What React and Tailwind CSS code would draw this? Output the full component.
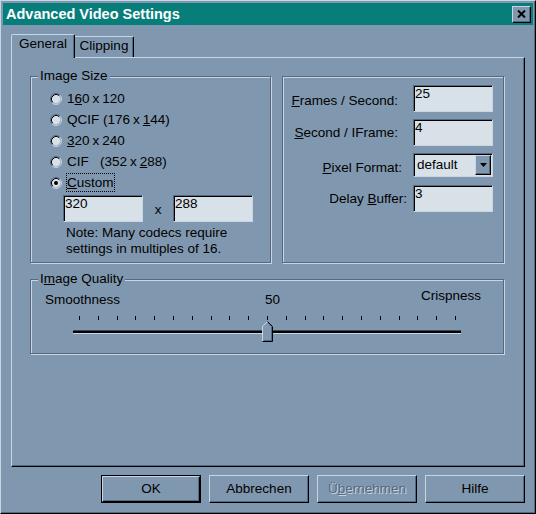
import React from "react";

const raised =
  "border border-t-[#c8d6e4] border-l-[#c8d6e4] border-r-black border-b-black shadow-[inset_-1px_-1px_0_#56697e]";
const sunken =
  "border border-t-[#56697e] border-l-[#56697e] border-r-[#c8d6e4] border-b-[#c8d6e4] shadow-[inset_1px_1px_0_#000] bg-[#d8e0e8]";
const etched =
  "border border-[#56697e] shadow-[inset_1px_1px_0_#c8d6e4,1px_1px_0_#c8d6e4]";

function Radio({ checked }) {
  return (
    <svg width="12" height="12" viewBox="0 0 12 12" className="shrink-0">
      <circle cx="6" cy="6" r="4.5" fill="#d8e0e8" />
      <path d="M2.11 9.89 A5.5 5.5 0 0 1 9.89 2.11" fill="none" stroke="#56697e" />
      <path d="M9.89 2.11 A5.5 5.5 0 0 1 2.11 9.89" fill="none" stroke="#c8d6e4" />
      <path d="M2.82 9.18 A4.5 4.5 0 0 1 9.18 2.82" fill="none" stroke="#000" />
      <path d="M9.18 2.82 A4.5 4.5 0 0 1 2.82 9.18" fill="none" stroke="#a9b9ca" />
      {checked && <circle cx="6" cy="6" r="2" fill="#000" />}
    </svg>
  );
}

function RadioRow({ children, checked, focus }) {
  return (
    <div className="flex h-[21px] items-center gap-[4px] pl-[19px]">
      <Radio checked={checked} />
      <span className={focus ? "border border-dotted border-black leading-[17px]" : "border border-transparent"}>
        {children}
      </span>
    </div>
  );
}

function Dim({ a, b }) {
  return (
    <>
      {a}
      <span className="mx-[3px]">x</span>
      {b}
    </>
  );
}

function Field({ value, className = "" }) {
  return (
    <div className={`h-[27px] w-[80px] pl-[1px] ${sunken} ${className}`}>{value}</div>
  );
}

function Group({ label, className, children }) {
  return (
    <div className={`relative bg-[#8098af] ${etched} ${className}`}>
      <span className="absolute -top-[9px] left-[7px] bg-[#8098af] px-[2px]">{label}</span>
      {children}
    </div>
  );
}

function Button({ children, primary, disabled }) {
  const inner = (
    <div
      className={`flex h-full w-full items-center justify-center ${raised} ${
        disabled ? "text-[#56697e] [text-shadow:1px_1px_0_#c8d6e4]" : ""
      }`}
    >
      {children}
    </div>
  );
  return primary ? (
    <div className="h-[28px] w-[100px] border border-black">{inner}</div>
  ) : (
    <div className="h-[28px] w-[100px]">{inner}</div>
  );
}

export default function App() {
  const ticks = Array.from({ length: 21 }, (_, i) => i);
  return (
    <div className="h-[514px] w-[536px] overflow-hidden border border-t-[#c8d6e4] border-l-[#c8d6e4] border-r-black border-b-black bg-[#8098af] p-[2px] font-['Liberation_Sans',Arial,sans-serif] text-[13.5px] leading-[16px] text-black shadow-[inset_-1px_-1px_0_#56697e]">
      <div className="flex h-[22px] items-center bg-[#087e7b] pl-[3px] pr-[2px]">
        <span className="text-[14.5px] font-bold text-white">Advanced Video Settings</span>
        <div className={`ml-auto flex h-[17px] w-[19px] items-center justify-center bg-[#8098af] ${raised}`}>
          <svg width="9" height="8" viewBox="0 0 9 8">
            <path d="M1 0.5 L8 7.5 M8 0.5 L1 7.5" stroke="#000" strokeWidth="2" />
          </svg>
        </div>
      </div>

      <div className="px-[8px] pt-[9px]">
        <div className="flex h-[23px] items-end">
          <div className="relative z-10 -mb-px flex h-[24px] w-[64px] justify-center rounded-t-[2px] border-l border-t border-r border-l-[#c8d6e4] border-t-[#c8d6e4] border-r-black bg-[#8098af] pt-[1px] shadow-[inset_-1px_0_0_#56697e]">
            General
          </div>
          <div className="flex h-[21px] w-[59px] justify-center rounded-tr-[2px] border-t border-r border-t-[#c8d6e4] border-r-black pt-[1px] shadow-[inset_-1px_0_0_#56697e]">
            Clipping
          </div>
        </div>

        <div className={`flex h-[410px] flex-col gap-[16px] pl-[18px] pt-[18px] ${raised}`}>
          <div className="flex gap-[11px]">
            <Group label="Image Size" className="h-[187px] w-[241px]">
              <div className="pt-[11px]">
                <RadioRow>
                  1<u>6</u>0<span className="mx-[3px]">x</span>120
                </RadioRow>
                <RadioRow>
                  QCIF (<Dim a="176" b={<><u>1</u>44</>} />)
                </RadioRow>
                <RadioRow>
                  <Dim a={<><u>3</u>20</>} b="240" />
                </RadioRow>
                <RadioRow>
                  <span className="inline-block w-[33px]">CIF</span>(<Dim a="352" b={<><u>2</u>88</>} />)
                </RadioRow>
                <RadioRow checked focus>
                  <u>C</u>ustom
                </RadioRow>
              </div>
              <div className="mt-[2px] flex items-center pl-[32px]">
                <Field value="320" />
                <span className="mt-[3px] w-[30px] text-center">x</span>
                <Field value="288" />
              </div>
              <div className="mt-[3px] pl-[35px]">
                Note: Many codecs require
                <br />
                settings in multiples of 16.
              </div>
            </Group>

            <Group label="" className="h-[187px] w-[222px]">
              <div className="flex flex-col items-end pr-[10px] pt-[8px]">
                <div className="flex items-center">
                  <span className="mr-[15px] mt-[5px]">
                    <u>F</u>rames / Second:
                  </span>
                  <Field value="25" />
                </div>
                <div className="mt-[7px] flex items-center">
                  <span className="mr-[15px]">
                    <u>S</u>econd / IFrame:
                  </span>
                  <Field value="4" />
                </div>
                <div className="mt-[7px] flex items-center">
                  <span className="mr-[11px] mt-[5px]">
                    <u>P</u>ixel Format:
                  </span>
                  <div className={`flex h-[24px] w-[80px] items-center pl-[3px] ${sunken}`}>
                    <span>default</span>
                    <div className={`ml-auto mr-[1px] flex h-[20px] w-[16px] items-center justify-center bg-[#8098af] ${raised}`}>
                      <svg width="7" height="4" viewBox="0 0 7 4">
                        <path d="M0 0 H7 L3.5 4 Z" fill="#000" />
                      </svg>
                    </div>
                  </div>
                </div>
                <div className="mt-[8px] flex items-center">
                  <span className="mr-[6px]">
                    Delay <u>B</u>uffer:
                  </span>
                  <Field value="3" />
                </div>
              </div>
            </Group>
          </div>

          <Group label={<>I<u>m</u>age Quality</>} className="h-[75px] w-[474px]">
            <div className="flex items-start pt-[12px]">
              <span className="ml-[14px] w-[220px]">Smoothness</span>
              <span>50</span>
              <span className="-mt-[4px] ml-auto mr-[22px]">Crispness</span>
            </div>
            <div className="relative ml-[42px] mt-[8px] w-[388px]">
              <div className="ml-[6px] flex h-[4px] w-[377px] justify-between">
                {ticks.map((i) => (
                  <span key={i} className="h-[4px] w-px bg-black" />
                ))}
              </div>
              <div className="mt-[10px] h-[4px] border-t border-b border-t-[#3a4a5c] border-b-[#c8d6e4] bg-black" />
              <svg width="11" height="21" viewBox="0 0 11 21" className="absolute left-[189px] top-[5px]">
                <path d="M0.5 20.5 V5.5 L5.5 0.5 L10.5 5.5 V20.5 Z" fill="#8098af" />
                <path d="M0.5 20 V5.5 L5.5 0.5" fill="none" stroke="#c8d6e4" />
                <path d="M5.5 0.5 L10.5 5.5 V20.5 H0.5" fill="none" stroke="#000" />
                <path d="M6 2 L9.5 5.5 V19.5 H1.5" fill="none" stroke="#56697e" />
              </svg>
            </div>
          </Group>
        </div>

        <div className="mt-[8px] flex justify-end gap-[8px]">
          <Button primary>OK</Button>
          <Button>Abbrechen</Button>
          <Button disabled>
            Ü<u>b</u>ernehmen
          </Button>
          <Button>Hilfe</Button>
        </div>
      </div>
    </div>
  );
}
